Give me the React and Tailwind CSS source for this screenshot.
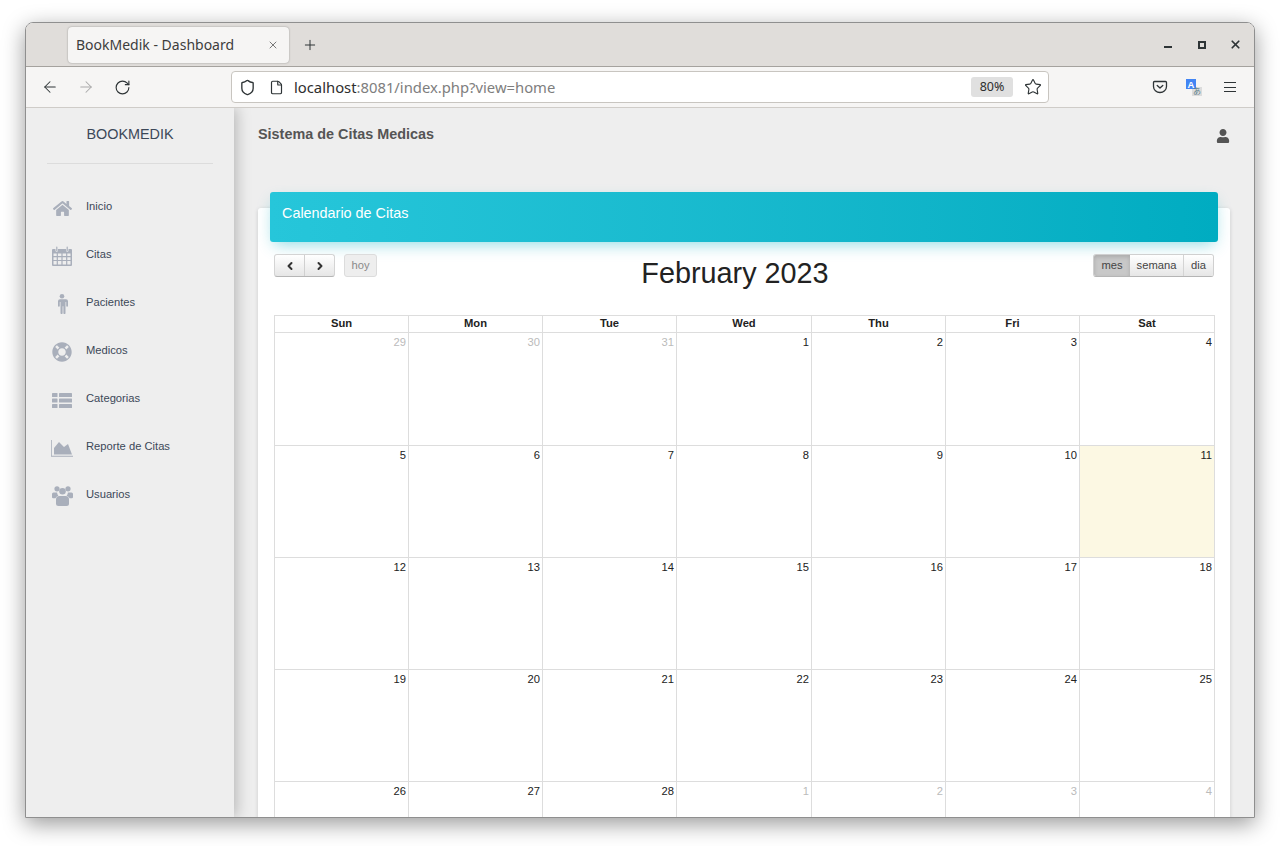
import { ArrowLeft, ArrowRight, RotateCw, Shield, File, Star, Plus, X, ChevronLeft, ChevronRight } from "lucide-react";
import { FaHome, FaLifeRing, FaUser } from "react-icons/fa";

const CalendarIcon = () => (
  <svg width="20" height="20" viewBox="0 0 20 20" fill="#a9afbb">
    <path fillRule="evenodd" d="M1 3h2.5v1.5a1.2 1.2 0 0 0 2.4 0V3h8.2v1.5a1.2 1.2 0 0 0 2.4 0V3H19a1 1 0 0 1 1 1v15a1 1 0 0 1-1 1H1a1 1 0 0 1-1-1V4a1 1 0 0 1 1-1zM1.5 7.5v2.6h3.2V7.5zm4.4 0v2.6h3.5V7.5zm4.7 0v2.6h3.5V7.5zm4.7 0v2.6h3.2V7.5zM1.5 11.2v2.7h3.2v-2.7zm4.4 0v2.7h3.5v-2.7zm4.7 0v2.7h3.5v-2.7zm4.7 0v2.7h3.2v-2.7zM1.5 15v3.4h3.2V15zm4.4 0v3.4h3.5V15zm4.7 0v3.4h3.5V15zm4.7 0v3.4h3.2V15z" />
    <rect x="4.2" y="0.5" width="1.2" height="4.5" rx="0.6" />
    <rect x="14.6" y="0.5" width="1.2" height="4.5" rx="0.6" />
  </svg>
);

const MaleIcon = () => (
  <svg width="12" height="20" viewBox="0 0 12 20" fill="#a9afbb">
    <circle cx="6" cy="2.3" r="2.3" />
    <path d="M2 5.2h8a2 2 0 0 1 2 2v4.6a.9.9 0 0 1-1.8 0V8h-.7v11a1 1 0 0 1-2.1 0v-6.8h-.8V19a1 1 0 0 1-2.1 0V8h-.7v3.8a.9.9 0 0 1-1.8 0V7.2a2 2 0 0 1 2-2z" />
  </svg>
);

const ListIcon = () => (
  <svg width="20" height="15" viewBox="0 0 20 15" fill="#a9afbb">
    <rect x="0" y="0" width="5.5" height="4" rx="0.6" />
    <rect x="7" y="0" width="13" height="4" rx="0.6" />
    <rect x="0" y="5.5" width="5.5" height="4" rx="0.6" />
    <rect x="7" y="5.5" width="13" height="4" rx="0.6" />
    <rect x="0" y="11" width="5.5" height="4" rx="0.6" />
    <rect x="7" y="11" width="13" height="4" rx="0.6" />
  </svg>
);

const AreaIcon = () => (
  <svg width="22" height="17" viewBox="0 0 22 17" fill="#a9afbb">
    <path d="M0 0h.8v15.8H22v.9H0z" />
    <path d="M3 14.5V8l5-6 5 5 4-3 4 10.5z" />
  </svg>
);

const UsersIcon = () => (
  <svg width="21" height="20" viewBox="0 0 21 20" fill="#a9afbb">
    <circle cx="5" cy="2.8" r="2.6" />
    <circle cx="16" cy="2.8" r="2.6" />
    <circle cx="10.5" cy="5.2" r="3.3" />
    <path d="M1.5 6.5h3.6a5 5 0 0 0 1.3 3.3 5 5 0 0 0-3 2.5H1.2A1.2 1.2 0 0 1 0 11V8a1.5 1.5 0 0 1 1.5-1.5z" />
    <path d="M19.5 6.5h-3.6a5 5 0 0 1-1.3 3.3 5 5 0 0 1 3 2.5h2.2A1.2 1.2 0 0 0 21 11V8a1.5 1.5 0 0 0-1.5-1.5z" />
    <path d="M7.5 10h6a3.5 3.5 0 0 1 3.5 3.5v4A2.5 2.5 0 0 1 14.5 20h-8A2.5 2.5 0 0 1 4 17.500v-4A3.500 3.500 0 0 1 7.500 10z" />
  </svg>
);

const HomeIcon = () => <FaHome className="text-[19px]" />;
const RingIcon = () => <FaLifeRing className="text-[20px]" />;

const navItems = [
  { label: "Inicio", icon: HomeIcon },
  { label: "Citas", icon: CalendarIcon },
  { label: "Pacientes", icon: MaleIcon },
  { label: "Medicos", icon: RingIcon },
  { label: "Categorias", icon: ListIcon },
  { label: "Reporte de Citas", icon: AreaIcon },
  { label: "Usuarios", icon: UsersIcon },
];

const days = ["Sun", "Mon", "Tue", "Wed", "Thu", "Fri", "Sat"];

const weeks = [
  [[29, 1], [30, 1], [31, 1], [1], [2], [3], [4]],
  [[5], [6], [7], [8], [9], [10], [11, 0, 1]],
  [[12], [13], [14], [15], [16], [17], [18]],
  [[19], [20], [21], [22], [23], [24], [25]],
  [[26], [27], [28], [1, 1], [2, 1], [3, 1], [4, 1]],
];

function TitleBar() {
  return (
    <div className="flex h-[44px] shrink-0 items-center bg-[#e0dddA] pl-[42px] border-b border-[#a5a29e]">
      <div className="flex h-[36px] w-[221px] items-center justify-between rounded-[4px] bg-[#f6f5f4] pl-[8px] pr-[10px] shadow-[0_0_2px_rgba(0,0,0,0.35)]">
        <span className="text-[14px] text-[#3d3d3d]">BookMedik - Dashboard</span>
        <X size={12} strokeWidth={1.3} className="text-[#333]" />
      </div>
      <Plus size={16} strokeWidth={1.5} className="ml-[13px] text-[#2e3436]" />
      <div className="ml-auto flex items-center pr-[12px]">
        <div className="mt-[5px] h-[2px] w-[8px] bg-[#2e3436]" />
        <div className="ml-[26px] h-[8px] w-[8px] border-2 border-[#2e3436]" />
        <X size={13} strokeWidth={3.2} className="ml-[23px] text-[#2e3436]" />
      </div>
    </div>
  );
}

function NavBar() {
  return (
    <div className="flex h-[41px] shrink-0 items-center bg-[#f6f5f4] border-b border-[#cfccc8] text-[#2e3436]">
      <div className="ml-[15px] flex items-center gap-[18px]">
        <ArrowLeft size={18} strokeWidth={1.4} />
        <ArrowRight size={18} strokeWidth={1.4} className="text-[#a9a9a9]" />
        <RotateCw size={17} strokeWidth={1.6} className="ml-[1px]" />
      </div>
      <div className="ml-[100px] flex h-[32px] w-[818px] items-center rounded-[4px] border border-[#c8c5c0] bg-white pl-[7px] pr-[6px]">
        <Shield size={17} strokeWidth={1.9} />
        <File size={15} strokeWidth={1.9} className="ml-[13px]" />
        <span className="ml-[10px] mt-[1px] text-[14.8px] text-[#2e2e2e]">
          localhost<span className="text-[#7e7e7e]">:8081/index.php?view=home</span>
        </span>
        <span className="ml-auto flex h-[20px] w-[42px] items-center justify-center rounded-[3px] bg-[#e0e0e0] text-[12.5px] text-[#2e2e2e]">80%</span>
        <Star size={18} strokeWidth={1.5} className="ml-[11px]" />
      </div>
      <div className="ml-auto flex items-center pr-[18px]">
        <svg width="16" height="16" viewBox="0 0 16 16" fill="none" stroke="#2e3436" strokeWidth="1.3" strokeLinecap="round" strokeLinejoin="round">
          <path d="M2.500 2.500h11a1 1 0 0 1 1 1v4a6.500 6 0 0 1-13 0v-4a1 1 0 0 1 1-1z" />
          <path d="M5.200 6.400 8 9l2.800-2.600" />
        </svg>
        <svg width="17" height="17" viewBox="0 0 17 17" className="ml-[18px]">
          <rect x="6" y="8" width="10" height="9" fill="#dcdcdc" />
          <rect x="0" y="0" width="10" height="10" fill="#4285f4" />
          <text x="5" y="8.500" textAnchor="middle" fontSize="9.500" fontWeight="bold" fill="#fff" fontFamily="Liberation Sans">A</text>
          <text x="11" y="15" textAnchor="middle" fontSize="8" fill="#60808a" fontFamily="Noto Sans CJK JP">あ</text>
        </svg>
        <div className="ml-[21px] flex w-[12px] flex-col gap-[3.5px]">
          <div className="h-[1px] bg-[#2e3436]" />
          <div className="h-[1px] bg-[#2e3436]" />
          <div className="h-[1px] bg-[#2e3436]" />
        </div>
      </div>
    </div>
  );
}

function Sidebar() {
  return (
    <aside className="relative z-10 flex w-[208px] shrink-0 flex-col bg-[#eeeeee] shadow-[2px_0_14px_rgba(0,0,0,0.25)]">
      <div className="mx-[21px] flex h-[56px] items-start justify-center border-b border-[#dcdcdc] pt-[17px] text-[14.4px] leading-[18px] text-[#3c4858]">
        BOOKMEDIK
      </div>
      <nav className="mt-[20px] flex flex-col">
        {navItems.map((item) => {
          const Icon = item.icon;
          return (
            <div key={item.label} className="flex h-[48px] items-center pl-[25px]">
              <span className="flex h-[24px] w-[22px] items-center justify-center">
                <span className="flex text-[#a9afbb]"><Icon /></span>
              </span>
              <span className="ml-[13px] -mt-[3px] text-[11.2px] text-[#3c4858]">{item.label}</span>
            </div>
          );
        })}
      </nav>
    </aside>
  );
}

function Calendar() {
  return (
    <div>
      <div className="flex h-[73px] items-start justify-between pt-[12px]">
        <div className="flex">
          <div className="flex h-[23px] rounded-[3px] border border-[#d4d4d4] border-b-[#b5b5b5] bg-gradient-to-b from-white to-[#e6e6e6] text-[#333]">
            <span className="flex w-[30px] items-center justify-center border-r border-[#d0d0d0]"><ChevronLeft size={12} strokeWidth={4} /></span>
            <span className="flex w-[29px] items-center justify-center"><ChevronRight size={12} strokeWidth={4} /></span>
          </div>
          <span className="ml-[9px] flex h-[23px] w-[33px] items-center justify-center rounded-[3px] border border-[#dcdcdc] bg-[#eeeeee] text-[11.2px] text-[#8a8a8a]">hoy</span>
        </div>
        <h2 className="mt-[2px] text-[28.8px] leading-[34px] text-[#222]">February 2023</h2>
        <div className="flex h-[23px] overflow-hidden rounded-[3px] border border-[#d0d0d0] border-b-[#b5b5b5] text-[11.2px] text-[#444]">
          <span className="flex w-[36px] items-center justify-center bg-[#c8c8c8] shadow-[inset_0_2px_4px_rgba(0,0,0,0.15)]">mes</span>
          <span className="flex w-[54px] items-center justify-center border-r border-[#d4d4d4] bg-gradient-to-b from-white to-[#e6e6e6]">semana</span>
          <span className="flex w-[29px] items-center justify-center bg-gradient-to-b from-white to-[#e6e6e6]">dia</span>
        </div>
      </div>
      <div className="w-[941px] border-l border-[#dddddd]">
        <div className="grid h-[18px] grid-cols-[134px_134px_134px_135px_134px_134px_135px] border-y border-[#dddddd]">
          {days.map((d) => (
            <div key={d} className="border-r border-[#dddddd] text-center text-[11.2px] font-bold leading-[15px] text-[#222]">{d}</div>
          ))}
        </div>
        {weeks.map((week, i) => (
          <div key={i} className={`grid grid-cols-[134px_134px_134px_135px_134px_134px_135px] border-b border-[#dddddd] ${i === 0 ? "h-[113px]" : "h-[112px]"}`}>
            {week.map(([n, off, today], j) => (
              <div key={j} className={`border-r border-[#dddddd] pr-[2px] pt-[1px] text-right text-[11.2px] leading-[16px] ${off ? "text-[#bbbbbb]" : "text-[#222]"} ${today ? "bg-[#fcf8e3]" : ""}`}>
                {n}
              </div>
            ))}
          </div>
        ))}
      </div>
    </div>
  );
}

export default function App() {
  return (
    <div className="h-[846px] w-[1280px] overflow-hidden bg-white pl-[25px] pt-[22px] font-['Noto_Sans',sans-serif]">
      <div className="flex h-[796px] w-[1230px] flex-col overflow-hidden rounded-t-[8px] border border-[#8f8f8f] shadow-[0_6px_22px_rgba(0,0,0,0.4)]">
        <TitleBar />
        <NavBar />
        <div className="flex min-h-0 flex-1 overflow-hidden bg-[#eeeeee] font-['Liberation_Sans',sans-serif]">
          <Sidebar />
          <main className="min-w-0 flex-1 pl-[24px] pr-[24px]">
            <div className="flex h-[84px] items-start justify-between pt-[17px]">
              <span className="text-[14.4px] font-bold leading-[18px] text-[#555555]">Sistema de Citas Medicas</span>
              <FaUser className="mr-[0px] mt-[4px] text-[14px] text-[#555555]" />
            </div>
            <div className="mt-[16px] flow-root h-[640px] rounded-t-[3px] bg-white px-[16px] shadow-[0_1px_4px_rgba(0,0,0,0.14)]">
              <div className="-mx-[4px] -mt-[16px] h-[50px] rounded-[3px] bg-gradient-to-r from-[#26c6da] to-[#00acc1] px-[12px] pt-[13px] text-[14.4px] leading-[17px] text-white shadow-[0_6px_16px_-4px_rgba(0,172,193,0.45)]">
                Calendario de Citas
              </div>
              <Calendar />
            </div>
          </main>
        </div>
      </div>
    </div>
  );
}
